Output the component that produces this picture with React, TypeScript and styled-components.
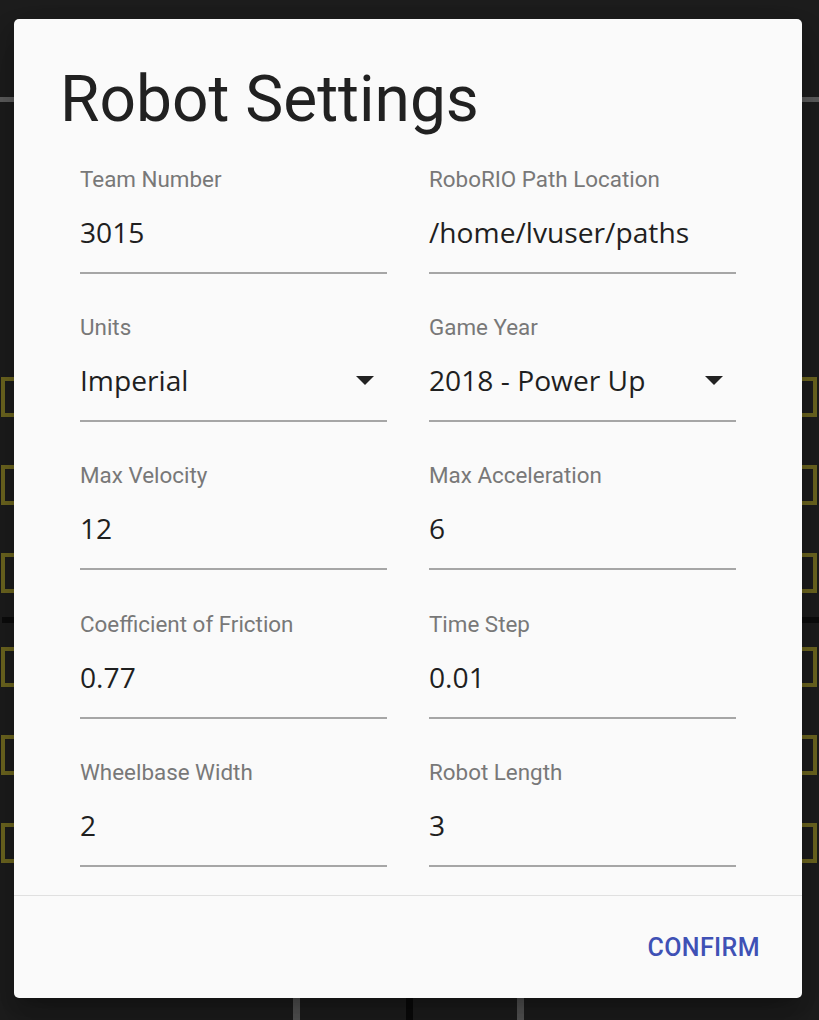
import React from 'react'
import styled, { createGlobalStyle } from 'styled-components'

const GlobalStyle = createGlobalStyle`
  html, body {
    margin: 0;
    padding: 0;
    background: #1d1d1d;
    overflow: hidden;
  }
`

const Page = styled.div`
  position: relative;
  width: 819px;
  height: 1020px;
  background: #1d1d1d;
  overflow: hidden;
`

const FieldCanvas = styled.svg`
  position: absolute;
  inset: 0;
`

const Overlay = styled.div`
  position: absolute;
  inset: 0;
  display: flex;
  align-items: flex-start;
  padding: 19px 0 0 14px;
  box-sizing: border-box;
`

const Dialog = styled.div`
  width: 788px;
  height: 979px;
  background: #fafafa;
  border-radius: 5px;
  box-shadow: 0 11px 15px -7px rgba(0, 0, 0, 0.2),
    0 24px 38px 3px rgba(0, 0, 0, 0.14), 0 9px 46px 8px rgba(0, 0, 0, 0.12);
  display: flex;
  flex-direction: column;
  box-sizing: border-box;
`

const Title = styled.h2`
  margin: 0;
  padding: 43px 46px 0;
  font-family: Roboto, 'Liberation Sans', sans-serif;
  font-weight: 400;
  font-size: 64px;
  line-height: 76.8px;
  color: #212121;
`

const Content = styled.div`
  display: grid;
  grid-template-columns: 307px 307px;
  column-gap: 42px;
  row-gap: 41.3px;
  padding: 28px 66px 28px;
  border-bottom: 1px solid #e0e0e0;
`

const FieldWrap = styled.div`
  display: flex;
  flex-direction: column;
`

const Label = styled.label`
  font-family: Roboto, 'Liberation Sans', sans-serif;
  font-size: 22.4px;
  line-height: 24px;
  color: #787878;
`

const ValueRow = styled.div`
  margin-top: 21px;
  height: 40px;
  padding-bottom: 20px;
  border-bottom: 2px solid #a6a6a6;
  display: flex;
  align-items: center;
  justify-content: space-between;
`

const Value = styled.span`
  font-family: 'Open Sans', 'Noto Sans', sans-serif;
  font-size: 28.2px;
  line-height: 40px;
  color: #1f1f1f;
  white-space: nowrap;
`

const Arrow = styled.svg`
  margin-right: 13px;
  flex-shrink: 0;
`

const Actions = styled.div`
  flex: 1;
  display: flex;
  align-items: center;
  justify-content: flex-end;
  padding: 0 28px;
`

const Button = styled.button`
  border: none;
  background: transparent;
  padding: 10px 14px 8px;
  font-family: Roboto, 'Liberation Sans', sans-serif;
  font-weight: 500;
  font-size: 25px;
  letter-spacing: 0.4px;
  color: #3f51b5;
  text-transform: uppercase;
  cursor: pointer;
`

interface FieldProps {
  label: string
  value: string
  select?: boolean
}

const Field: React.FC<FieldProps> = ({ label, value, select }) => (
  <FieldWrap>
    <Label>{label}</Label>
    <ValueRow>
      <Value>{value}</Value>
      {select && (
        <Arrow width="18" height="9" viewBox="0 0 18 9">
          <polygon points="0,0 18,0 9,9" fill="#222" />
        </Arrow>
      )}
    </ValueRow>
  </FieldWrap>
)

const fields: FieldProps[] = [
  { label: 'Team Number', value: '3015' },
  { label: 'RoboRIO Path Location', value: '/home/lvuser/paths' },
  { label: 'Units', value: 'Imperial', select: true },
  { label: 'Game Year', value: '2018 - Power Up', select: true },
  { label: 'Max Velocity', value: '12' },
  { label: 'Max Acceleration', value: '6' },
  { label: 'Coefficient of Friction', value: '0.77' },
  { label: 'Time Step', value: '0.01' },
  { label: 'Wheelbase Width', value: '2' },
  { label: 'Robot Length', value: '3' },
]

const boxTops = [377, 465, 553, 647, 735, 823]

const Backdrop: React.FC = () => (
  <FieldCanvas width="819" height="1020" viewBox="0 0 819 1020">
    <rect x="0" y="97" width="819" height="5" fill="#5e5e5e" />
    {boxTops.map((y) => (
      <g key={y}>
        <rect x="3" y={y + 2} width="60" height="36" fill="none" stroke="#6f6820" strokeWidth="4" />
        <rect x="756" y={y + 2} width="59" height="36" fill="none" stroke="#6f6820" strokeWidth="4" />
      </g>
    ))}
    <rect x="2" y="617" width="40" height="6" fill="#0c0c0c" />
    <rect x="780" y="617" width="39" height="6" fill="#0c0c0c" />
    <rect x="293" y="960" width="7" height="60" fill="#555" />
    <rect x="406" y="960" width="7" height="60" fill="#0a0a0a" />
    <rect x="517" y="960" width="7" height="60" fill="#555" />
  </FieldCanvas>
)

const App: React.FC = () => {
  return (
    <>
      <GlobalStyle />
      <Page>
        <Backdrop />
        <Overlay>
          <Dialog>
            <Title>Robot Settings</Title>
            <Content>
              {fields.map((f) => (
                <Field key={f.label} {...f} />
              ))}
            </Content>
            <Actions>
              <Button>Confirm</Button>
            </Actions>
          </Dialog>
        </Overlay>
      </Page>
    </>
  )
}

export default App
